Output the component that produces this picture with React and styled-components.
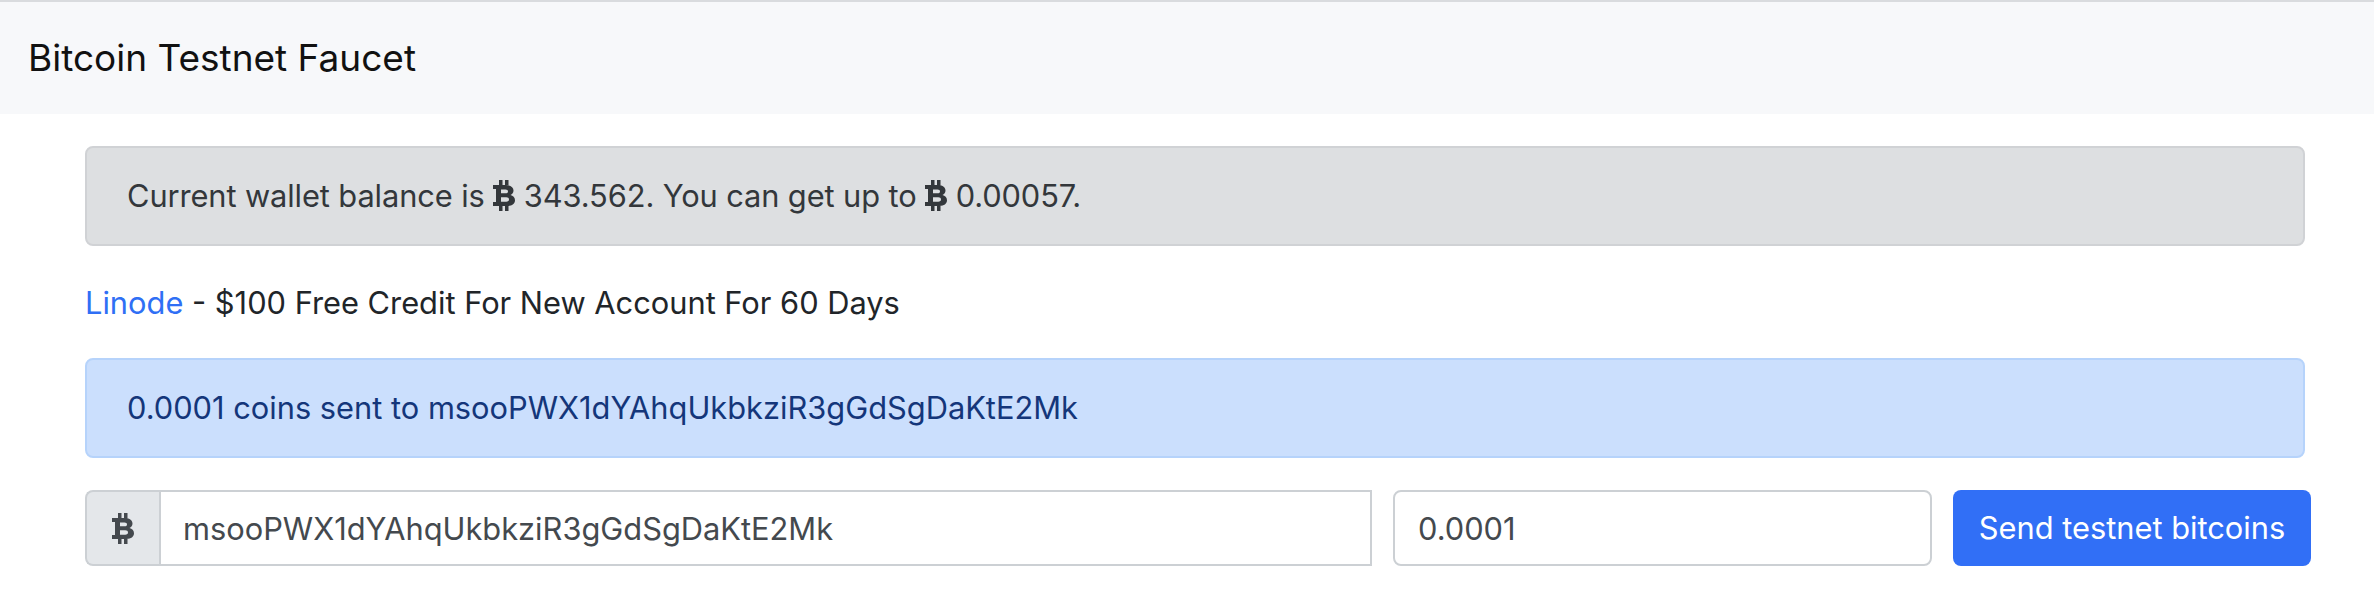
import React from "react";
import styled, { createGlobalStyle } from "styled-components";

const Global = createGlobalStyle`
  html, body {
    margin: 0;
    padding: 0;
    background: #fff;
    font-family: Inter, "Liberation Sans", sans-serif;
    font-size: 30.8px;
    line-height: 48px;
    color: #212529;
  }
`;

const Navbar = styled.nav`
  height: 112px;
  border-top: 2px solid #d9dbde;
  background: #f7f8fa;
  display: flex;
  align-items: center;
  padding-left: 28px;
`;

const Brand = styled.a`
  font-size: 37px;
  color: #111;
`;

const Container = styled.main`
  width: 2220px;
  margin-left: 85px;
  padding-top: 32px;
`;

const Alert = styled.div`
  box-sizing: border-box;
  height: 100px;
  padding: 24px 40px;
  border: 2px solid ${(p) => (p.$info ? "#b6d3fb" : "#d0d2d5")};
  border-radius: 8px;
  background: ${(p) => (p.$info ? "#cbdffd" : "#dddfe1")};
  color: ${(p) => (p.$info ? "#14367a" : "#33373b")};
  letter-spacing: ${(p) => (p.$info ? "0" : "-0.1px")};
`;

const CoinSvg = styled.svg`
  height: 31px;
  width: 22px;
  vertical-align: -4px;
  fill: currentColor;
`;

const Coin = () => (
  <CoinSvg viewBox="0 0 22 31">
    <path
      fillRule="evenodd"
      d="M6 0h3.5v5H6zM12 0h3.5v5H12zM6 26h3.5v5H6zM12 26h3.5v5H12zM0 5H13C18 5 20.5 7.5 20.5 10.5C20.5 12.8 19.3 14.3 17.5 15C20 15.6 22 17.5 22 20.3C22 23.8 19 26 14.5 26H0V22H3V9H0ZM8 9.5V13.3H12.5C14 13.3 15 12.6 15 11.4C15 10.2 14 9.5 12.5 9.5ZM8 17.3V21.7H13.2C15 21.7 16 20.9 16 19.5C16 18.1 15 17.3 13.2 17.3Z"
    />
  </CoinSvg>
);

const Promo = styled.p`
  margin: 33px 0 31px;
  height: 48px;
`;

const Link = styled.a`
  color: #2f6ff5;
  text-decoration: none;
`;

const Form = styled.form`
  display: flex;
  margin-top: 32px;
  width: 2226px;
  gap: 21px;
`;

const Group = styled.div`
  display: flex;
  width: 1287px;
`;

const Addon = styled.span`
  box-sizing: border-box;
  width: 74px;
  height: 76px;
  display: flex;
  align-items: center;
  justify-content: center;
  background: #e4e7ea;
  border: 2px solid #ccd0d4;
  border-right-width: 0;
  border-radius: 8px 0 0 8px;
  color: #44494e;
`;

const Field = styled.input`
  box-sizing: border-box;
  height: 76px;
  min-width: 0;
  width: ${(p) => p.$width}px;
  padding: 0 ${(p) => p.$pad}px;
  border: 2px solid #ccd0d4;
  border-radius: ${(p) => p.$radius};
  background: #fff;
  font: inherit;
  color: #44494e;
  outline: none;
`;

const Button = styled.button`
  box-sizing: border-box;
  width: 358px;
  height: 76px;
  border: 0;
  border-radius: 8px;
  background: #316ff6;
  color: #fff;
  font: inherit;
  padding: 0;
`;

export default function App() {
  return (
    <>
      <Global />
      <Navbar>
        <Brand>Bitcoin Testnet Faucet</Brand>
      </Navbar>
      <Container>
        <Alert>
          Current wallet balance is <Coin /> 343.562. You can get up to <Coin /> 0.00057.
        </Alert>
        <Promo>
          <Link>Linode</Link> - $100 Free Credit For New Account For 60 Days
        </Promo>
        <Alert $info>0.0001 coins sent to msooPWX1dYAhqUkbkziR3gGdSgDaKtE2Mk</Alert>
        <Form>
          <Group>
            <Addon>
              <Coin />
            </Addon>
            <Field $width={1213} $pad={22} $radius="0" readOnly value="msooPWX1dYAhqUkbkziR3gGdSgDaKtE2Mk" />
          </Group>
          <Field $width={539} $pad={23} $radius="8px" readOnly value="0.0001" />
          <Button type="button">Send testnet bitcoins</Button>
        </Form>
      </Container>
    </>
  );
}
